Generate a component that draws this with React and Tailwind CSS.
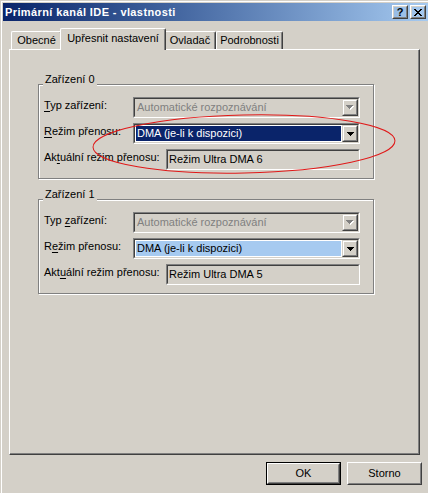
import React from "react";

const CLOSE = ["XX....XX", ".XX..XX.", "..XXXX..", "...XX...", "..XXXX..", ".XX..XX.", "XX....XX"];
const ARROW = ["XXXXXXX", ".XXXXX.", "..XXX..", "...X..."];

function Pixels({ rows, color, dx = 0, dy = 0 }) {
  return rows.flatMap((r, y) =>
    [...r].map((c, x) =>
      c === "X" ? (
        <rect key={`${x}-${y}`} x={x + dx} y={y + dy} width="1" height="1" fill={color} />
      ) : null
    )
  );
}

// 3d frames, win2000 style
function Raised({ push, className = "", inner = "", children }) {
  const outer = push
    ? "border-t-white border-l-white border-r-[#404040] border-b-[#404040]"
    : "border-t-[#d4d0c8] border-l-[#d4d0c8] border-r-[#404040] border-b-[#404040]";
  const innerB = push
    ? "border-t-[#d4d0c8] border-l-[#d4d0c8] border-r-[#808080] border-b-[#808080]"
    : "border-t-white border-l-white border-r-[#808080] border-b-[#808080]";
  return (
    <div className={`border ${outer} ${className}`}>
      <div className={`h-full border ${innerB} ${inner}`}>{children}</div>
    </div>
  );
}

function Sunken({ className = "", inner = "", children }) {
  return (
    <div className={`border border-t-[#808080] border-l-[#808080] border-r-white border-b-white ${className}`}>
      <div className={`h-full border border-t-[#404040] border-l-[#404040] border-r-[#d4d0c8] border-b-[#d4d0c8] ${inner}`}>
        {children}
      </div>
    </div>
  );
}

function Arrow({ disabled }) {
  if (disabled) {
    return (
      <svg width="8" height="5" shapeRendering="crispEdges">
        <Pixels rows={ARROW} color="#ffffff" dx={1} dy={1} />
        <Pixels rows={ARROW} color="#808080" />
      </svg>
    );
  }
  return (
    <svg width="7" height="4" shapeRendering="crispEdges">
      <Pixels rows={ARROW} color="#000000" />
    </svg>
  );
}

function Combo({ value, mode }) {
  const disabled = mode === "disabled";
  const hl =
    mode === "focus"
      ? "bg-[#0a246a] text-white"
      : mode === "select"
      ? "bg-[#a6caf0] text-black"
      : "text-[#808080]";
  return (
    <Sunken className="w-[227px] h-[21px]" inner={`flex ${disabled ? "bg-[#d4d0c8]" : "bg-white"}`}>
      <div className="flex-1 p-px">
        <div className={`h-full flex items-center pl-px leading-[13px] ${hl}`}>{value}</div>
      </div>
      <Raised className="w-[16px] h-full" inner="flex items-center justify-center bg-[#d4d0c8]">
        <Arrow disabled={disabled} />
      </Raised>
    </Sunken>
  );
}

function Field({ value }) {
  return (
    <Sunken className="w-[194px] h-[21px]" inner="flex items-center pl-px bg-[#d4d0c8] leading-[13px]">
      {value}
    </Sunken>
  );
}

function Row({ label, children }) {
  return (
    <div className="flex h-[21px] justify-between">
      <div className="mt-[2px] leading-[13px] whitespace-nowrap">{label}</div>
      {children}
    </div>
  );
}

function Group({ title, className = "", children }) {
  return (
    <div
      className={`relative w-[336px] border border-[#808080] shadow-[inset_1px_1px_0_#fff,1px_1px_0_#fff] pt-[12px] pl-[5px] pr-[13px] pb-[8px] ${className}`}
    >
      <span className="absolute left-[4px] -top-[12px] bg-[#d4d0c8] px-[2px] pb-[2px] leading-[13px]">{title}</span>
      <div className="flex flex-col gap-[5px]">{children}</div>
    </div>
  );
}

const U = ({ children }) => <span className="underline underline-offset-[2px]">{children}</span>;

function Tab({ label, w, active }) {
  if (active) {
    return (
      <div
        className={`relative z-10 -mx-[2px] -mb-px h-[22px] ${w} bg-[#d4d0c8] border-t border-l border-r border-t-white border-l-white border-r-[#404040] rounded-t-[2px] shadow-[inset_-1px_0_0_#808080] pt-[3px] text-center leading-[13px]`}
      >
        {label}
      </div>
    );
  }
  return (
    <div
      className={`h-[18px] ${w} border-t border-l border-r border-t-white border-l-white border-r-[#404040] rounded-t-[2px] shadow-[inset_-1px_0_0_#808080] pt-[2px] text-center leading-[13px]`}
    >
      {label}
    </div>
  );
}

export default function App() {
  return (
    <div className="relative w-[428px] h-[493px] overflow-hidden bg-[#d4d0c8] pt-px pl-px font-['Liberation_Sans',Arial,sans-serif] text-[11px] text-black">
      <div className="h-full border-t border-l border-t-white border-l-white pt-px pl-px">
        {/* title bar */}
        <div className="flex h-[18px] items-center bg-linear-to-r from-[#0a246a] to-[#a6caf0] pl-[2px] pr-[2px]">
          <span className="font-bold text-white tracking-[0.4px] leading-[13px]">Primární kanál IDE - vlastnosti</span>
          <div className="ml-auto flex gap-[2px]">
            <Raised push className="w-[16px] h-[14px]" inner="flex items-center justify-center">
              <span className="font-bold text-[11px] leading-[10px]">?</span>
            </Raised>
            <Raised push className="w-[16px] h-[14px]" inner="flex items-center justify-center">
              <svg width="8" height="7" shapeRendering="crispEdges">
                <Pixels rows={CLOSE} color="#000000" />
              </svg>
            </Raised>
          </div>
        </div>

        <div className="pl-[6px]">
          {/* tabs */}
          <div className="mt-[7px] flex h-[21px] items-end pl-[2px]">
            <Tab label="Obecné" w="w-[51px]" />
            <Tab label="Upřesnit nastavení" w="w-[106px]" active />
            <Tab label="Ovladač" w="w-[52px]" />
            <Tab label="Podrobnosti" w="w-[67px]" />
          </div>

          {/* panel */}
          <div className="w-[411px] h-[406px] border border-t-white border-l-white border-r-[#404040] border-b-[#404040] shadow-[inset_-1px_-1px_0_#808080] pt-[34px] pl-[28px]">
            <Group title="Zařízení 0">
              <Row label={<><U>T</U>yp zařízení:</>}>
                <Combo value="Automatické rozpoznávání" mode="disabled" />
              </Row>
              <Row label={<><U>R</U>ežim přenosu:</>}>
                <Combo value="DMA (je-li k dispozici)" mode="focus" />
              </Row>
              <Row label={<>Ak<U>t</U>uální režim přenosu:</>}>
                <Field value="Režim Ultra DMA 6" />
              </Row>
            </Group>

            <Group title="Zařízení 1" className="mt-[20px]">
              <Row label={<>Typ <U>z</U>ařízení:</>}>
                <Combo value="Automatické rozpoznávání" mode="disabled" />
              </Row>
              <Row label={<>R<U>e</U>žim přenosu:</>}>
                <Combo value="DMA (je-li k dispozici)" mode="select" />
              </Row>
              <Row label={<>Akt<U>u</U>ální režim přenosu:</>}>
                <Field value="Režim Ultra DMA 5" />
              </Row>
            </Group>
          </div>

          {/* buttons */}
          <div className="mt-[7px] flex gap-[6px] pl-[257px]">
            <div className="w-[75px] h-[23px] border border-black">
              <Raised push className="h-full" inner="flex items-center justify-center leading-[13px]">
                OK
              </Raised>
            </div>
            <Raised push className="w-[75px] h-[23px]" inner="flex items-center justify-center leading-[13px]">
              Storno
            </Raised>
          </div>
        </div>
      </div>

      {/* red marker ellipse drawn over the screenshot */}
      <svg className="pointer-events-none absolute left-0 top-0" width="428" height="493">
        <ellipse cx="244" cy="144" rx="151" ry="29" fill="none" stroke="#e01818" strokeWidth="1" transform="rotate(-1.2 244 144)" />
      </svg>
    </div>
  );
}
